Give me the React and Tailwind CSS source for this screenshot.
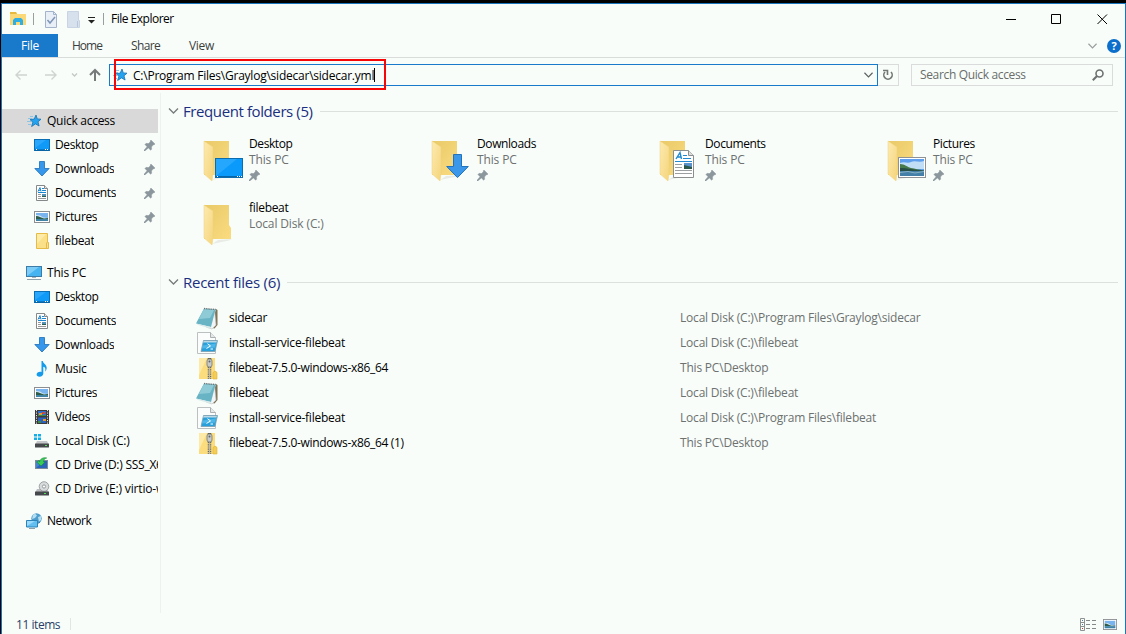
import React from "react";

function Star({ className = "" }) {
  return (
    <svg width="16" height="16" viewBox="0 0 16 16" className={`shrink-0 ${className}`}>
      <path d="M1 5.5h4M0 8.5h4M1 11.5h3M3 3.5h3" stroke="#8cc4e6" strokeWidth="1" />
      <path d="M9 2l1.300 3.900 3.700.3-3 2.600 1.100 4.200-3.600-2.100-3.900 2.600 1.300-4.300L3 6.600l4.200-.5z" fill="#25a3ee" stroke="#1673b4" strokeWidth=".8" />
    </svg>
  );
}
function DesktopShape() {
  return (
    <>
      <rect x=".5" y="2.5" width="15" height="11" fill="#109af8" stroke="#0b6fb5" />
      <path d="M1 11L12 3H1z" fill="#35adff" opacity=".7" />
      <path d="M1 13h14" stroke="#075a94" />
      <path d="M2 12.5h1M11 12.5h1M13 12.5h1" stroke="#fff" />
    </>
  );
}
function DocShape() {
  return (
    <>
      <path d="M2.5.5h8l3 3v12h-11z" fill="#fff" stroke="#85898a" />
      <path d="M10.5.5v3h3" fill="#e4e4e4" stroke="#85898a" />
      <path d="M4 6.5l2-4 1 4M4.7 5.3h2M8 3.5h2M8 5.5h4M4 7.5h8" stroke="#1c86cf" fill="none" />
      <path d="M4 9.5h3M4 11.5h3M4 13.5h8" stroke="#9a9a9a" />
      <path d="M8 9h4v3H8z" fill="#5791b8" />
      <path d="M8 11h4v1H8z" fill="#2d5f4c" />
    </>
  );
}
function PictureShape() {
  return (
    <>
      <rect x=".5" y="2.5" width="15" height="11" fill="#fff" stroke="#8b8f91" />
      <rect x="2" y="4" width="12" height="8" fill="#79b4ee" />
      <path d="M2 6l4 .5 3 2 5 .5v1H2z" fill="#d6e8f5" />
      <path d="M2 7c3 0 5 2 8 2.4L14 9v1H2z" fill="#2d5d4a" />
      <path d="M2 10h12v2H2z" fill="#4083a5" />
    </>
  );
}
const shapes = {
  desktop: <DesktopShape />,
  downloads: <path d="M5.5.5h5v7h4.7L8 15 .8 7.500h4.700z" fill="#3797ea" stroke="#1c6fb9" strokeWidth=".8" />,
  documents: <DocShape />,
  pictures: <PictureShape />,
  folder: (
    <>
      <path d="M2.500 .5h11v9h1v6h-12z" fill="#fbe08a" stroke="#e5bb45" />
      <path d="M12.500 9.500v6" stroke="#e5bb45" />
      <path d="M3 1l9 0L3 11z" fill="#fdebaa" />
    </>
  ),
  pc: (
    <>
      <rect x=".5" y="1.500" width="15" height="10" fill="#45b4f1" stroke="#3c7ca6" />
      <path d="M1 11V2h12z" fill="#7bcdf8" />
      <path d="M6 12.500h4" stroke="#a8b4bb" />
      <path d="M1 14.500h14" stroke="#8fa1ab" />
    </>
  ),
  music: (
    <path d="M7.500 0h1.300c.3 3 4.200 3.500 3.900 7.200-.1 1.500-1 2.700-1.700 3.200.9-2.500.3-4.200-1.700-4.700v6.800c0 2-1.700 3.200-3.700 3.200-1.900 0-3-.9-3-2.200 0-1.900 2.300-3.200 4.900-2.600z" fill="#159bea" />
  ),
  videos: (
    <>
      <rect x="1" y="1" width="14" height="14" fill="#3c3c3c" />
      <path d="M2.500 1v14M13.500 1v14" stroke="#e6e6e6" strokeDasharray="1.200 1.300" />
      <rect x="4" y="2" width="8" height="5" fill="#3370cd" />
      <rect x="4" y="8.500" width="8" height="5.500" fill="#2c62bd" />
      <path d="M5 4h3v2H5zM9 10h3v2H9z" fill="#e79a26" />
      <path d="M8 3h3v2H8z" fill="#ce4a36" />
      <path d="M4 6h8v1H4zM4 12h3v2H4z" fill="#3c8a43" />
    </>
  ),
  disk: (
    <>
      <path d="M0 1h3v2.500H0zM4 1h3v2.500H4zM0 4.500h3V7H0zM4 4.500h3V7H4z" fill="#12aee9" />
      <path d="M3 8h10l1.500 3H1.500z" fill="#c4c7c9" />
      <rect x="1" y="10.500" width="14" height="4" rx=".5" fill="#46494b" />
      <rect x="11" y="12" width="2" height="1" fill="#51df5c" />
    </>
  ),
  install: (
    <>
      <rect x="1.500" y="3.500" width="12" height="8" fill="#4385d2" stroke="#7b8b9b" />
      <path d="M2 11l8-7h3v7z" fill="#2865ba" />
      <path d="M5 3.500L2.800 5 7 9 11 5H9.500c0-2.200 1.200-3.500 3.200-4C9 0 6 2 5.500 5z" fill="#37cb56" stroke="#148a35" strokeWidth=".6" />
    </>
  ),
  cd: (
    <>
      <path d="M3 8h10l1.500 3H1.500z" fill="#babdc0" />
      <circle cx="10" cy="5.500" r="4.800" fill="#d7dbdc" stroke="#8b9192" strokeWidth=".8" />
      <circle cx="10" cy="5.500" r="1.600" fill="#fff" stroke="#858989" strokeWidth=".8" />
      <rect x="1" y="10.500" width="14" height="4" rx=".5" fill="#46494b" />
      <rect x="10" y="12" width="2" height="1" fill="#51df5c" />
    </>
  ),
  network: (
    <>
      <circle cx="10.500" cy="5.500" r="5.200" fill="#4c9dcc" />
      <path d="M7 1.700c2-1.300 3-.5 4 .8L9 5 6 6zM12 4l3-1v4l-2 2z" fill="#b5dff1" />
      <path d="M13 9l1.500-1-2 3z" fill="#245f87" />
      <path d="M.5 7.500h11v6.500H.5z" fill="#63bff0" stroke="#2c83b8" />
      <path d="M1 13V8h8z" fill="#9bdafa" />
      <path d="M3 15.500h6" stroke="#8ba2ae" />
    </>
  ),
};
function Icon({ name, className = "" }) {
  return <svg width="16" height="16" viewBox="0 0 16 16" className={`shrink-0 ${className}`}>{shapes[name]}</svg>;
}
function Pin({ className = "" }) {
  return (
    <svg width="11" height="11" viewBox="0 0 11 11" className={`shrink-0 ${className}`}>
      <path d="M7 0l4 4-1 .9-.8-.1-1.700 2.200.2 2.200-1.100 1-2.200-2.200L.8 11H0v-.8L3 6.700 .9 4.500l1.200-1.200 2.300.3 2-1.800-.3-.9z" fill="#8b979c" stroke="#8b979c" strokeWidth=".4" />
    </svg>
  );
}
function Chevron({ color = "#777b79", className = "", w = 10 }) {
  return (
    <svg width={w} height="6" viewBox="0 0 10 6" className={`shrink-0 ${className}`}>
      <path d="M.5.5L5 5 9.500.5" fill="none" stroke={color} strokeWidth="1.300" />
    </svg>
  );
}

const overlays = {
  desktop: (
    <>
      <rect x="19.500" y="22.500" width="27" height="19" fill="#0a9afb" stroke="#0b6cae" />
      <path d="M20 40V23h21z" fill="#2caaff" opacity=".8" />
      <path d="M20 40.500h26" stroke="#0565a8" />
      <path d="M21 40.500h1M41 40.500h1M43 40.500h1M45 40.500h1" stroke="#fff" />
    </>
  ),
  downloads: <path d="M29.500 18.500h8v12h6.800L33.500 41.600 22.700 30.500h6.800z" fill="#3a97ea" stroke="#2273bb" />,
  documents: (
    <>
      <path d="M21.500 14.500h15l5 5v22h-20z" fill="#fff" stroke="#8b8e8f" />
      <path d="M36.500 14.500v5h5" fill="#ddd" stroke="#8b8e8f" />
      <path d="M24 23l4-6.500 1.500 6.500M25.500 21h4" fill="none" stroke="#2189d0" strokeWidth="1.400" />
      <path d="M31 19.500h4M31 22.500h8M23 25.500h17" stroke="#2189d0" />
      <path d="M23 28.500h7M23 31.500h7M23 34.500h17M23 37.500h17" stroke="#9c9fa0" />
      <path d="M32 27h8v6h-8z" fill="#5b92cc" />
      <path d="M32 29l8 2v2h-8z" fill="#2c594b" />
    </>
  ),
  pictures: (
    <>
      <rect x="18.500" y="21.500" width="27" height="20" fill="#fff" stroke="#8e9294" />
      <rect x="20" y="23" width="24" height="17" fill="#5d9fed" />
      <path d="M20 27c5-2 7 1 11-1s8 1 13-1v8H20z" fill="#c0def5" />
      <path d="M20 28c5 0 7 3 11 4s8 1 13 3H20z" fill="#477a4b" />
      <path d="M20 32c8 0 14 2 24 2.500V36H20z" fill="#284f45" />
      <path d="M20 35h24v5H20z" fill="#447fa8" />
      <path d="M20 36.500l8-1 7 1.500 9-1.500" fill="none" stroke="#86b1c5" />
    </>
  ),
};
function BigFolder({ kind }) {
  return (
    <svg width="48" height="48" viewBox="0 0 48 48" className="shrink-0">
      <defs>
        <linearGradient id={`b-${kind}`} x1="0" y1="0" x2="1" y2="1">
          <stop offset="0" stopColor="#e9c968" />
          <stop offset="1" stopColor="#fadc80" />
        </linearGradient>
        <linearGradient id={`f-${kind}`} x1="0" y1="0" x2="1" y2="1">
          <stop offset="0" stopColor="#fdeab0" />
          <stop offset="1" stopColor="#f5d57b" />
        </linearGradient>
      </defs>
      <path d="M16 44l6-4 14-1-3 1.500z" fill="#e9ece6" />
      <path d={kind === "plain" ? "M8 5h25v20l2 3v11H8z" : "M8 5h25v34H8z"} fill={`url(#b-${kind})`} />
      <path d="M8 5l9 6v27l-1 7-8-7z" fill={`url(#f-${kind})`} stroke="#efd27f" strokeWidth=".5" />
      {overlays[kind]}
    </svg>
  );
}

function FileIcon({ kind }) {
  return (
    <svg width="24" height="24" viewBox="0 0 24 24" className="shrink-0">
      {kind === "note" && (
        <>
          <path d="M21 3l1.500 1v15l-3 3.500-4-1z" fill="#7f7255" />
          <path d="M19.500 4L21 19l-4 4-6-2z" fill="#f2f5f5" stroke="#b9c1c2" strokeWidth=".6" />
          <path d="M9 2.500L20.500 3.500 16 21 1 17.500z" fill="#68b4c5" />
          <path d="M9 3l10 1-4 8-11 1z" fill="#9bd3dc" opacity=".75" />
          <path d="M1 17.500L16 21l-.5 1.500L3 19z" fill="#d9e9e9" />
          <path d="M9 2.500l12 1" stroke="#6d7475" strokeWidth="1.400" strokeDasharray="1 .8" />
        </>
      )}
      {kind === "script" && (
        <>
          <path d="M2.500 1.500h13l5 5v16h-18z" fill="#fbfcfc" stroke="#bcc0c0" />
          <path d="M15.500 1.500v5h5" fill="#e5e8e8" stroke="#aaafb0" />
          <path d="M8.500 9.500h14L20 20.500H6z" fill="#2aa0da" stroke="#7f9eac" strokeWidth=".8" />
          <path d="M8.600 10h13.300l-.4 1.600H8.200z" fill="#bcd9e5" />
          <path d="M7.500 14.500L21 12.500l-1 4-13 1z" fill="#5bc1ee" opacity=".7" />
          <path d="M12.500 12.700l3 2.200-4 2.600M15.500 18h2.500" stroke="#fff" fill="none" />
        </>
      )}
      {kind === "zip" && (
        <>
          <path d="M4 2h16v13l2 1v7H4z" fill="#fbdd7e" />
          <path d="M4 2h8L4 19z" fill="#fdeaa6" />
          <path d="M18 23v-6.500l2-1.500 2 1.500V23z" fill="#f6cd54" stroke="#dfb136" strokeWidth=".6" />
          <path d="M14.500 2v21" stroke="#5e5e58" strokeWidth="3.500" strokeDasharray="1 .8" />
          <path d="M14.500 9v14" stroke="#b9bab5" strokeWidth="1.200" />
          <rect x="12" y="3" width="5" height="8" rx="2" fill="#c6cac9" stroke="#737979" strokeWidth=".8" />
          <circle cx="14.500" cy="5.500" r="1" fill="#5e6464" />
        </>
      )}
    </svg>
  );
}

const quick = [
  ["desktop", "Desktop", true, "tracking-[-0.4px]"],
  ["downloads", "Downloads", true, "tracking-[-0.35px]"],
  ["documents", "Documents", true, "tracking-[-0.35px]"],
  ["pictures", "Pictures", true, "tracking-[-0.35px]"],
  ["folder", "filebeat", false, "tracking-[-0.3px]"],
];
const pc = [
  ["desktop", "Desktop", false, "tracking-[-0.4px]"],
  ["documents", "Documents", false, "tracking-[-0.35px]"],
  ["downloads", "Downloads", false, "tracking-[-0.35px]"],
  ["music", "Music", false, "tracking-[-0.2px]"],
  ["pictures", "Pictures", false, "tracking-[-0.35px]"],
  ["videos", "Videos", false, "tracking-[-0.35px]"],
  ["disk", "Local Disk (C:)", false, "tracking-[-0.13px]"],
  ["install", "CD Drive (D:) SSS_X6", false, "tracking-[-0.25px]"],
  ["cd", "CD Drive (E:) virtio-w", false, "tracking-[-0.15px]"],
];
function NavRow({ row: [icon, label, pinned, track] }) {
  return (
    <div className="flex h-6 items-center pl-8">
      <Icon name={icon} />
      <span className={`ml-[5px] overflow-hidden whitespace-nowrap ${track}`}>{label}</span>
      {pinned && <Pin className="ml-auto mr-[3px]" />}
    </div>
  );
}
const tiles = [
  ["desktop", "Desktop", "This PC", true, "tracking-[-0.4px]"],
  ["downloads", "Downloads", "This PC", true, "tracking-[-0.4px]"],
  ["documents", "Documents", "This PC", true, "tracking-[-0.4px]"],
  ["pictures", "Pictures", "This PC", true, "tracking-[-0.4px]"],
  ["plain", "filebeat", "Local Disk (C:)", false, "tracking-[-0.3px]"],
];
const files = [
  ["note", "sidecar", "Local Disk (C:)\\Program Files\\Graylog\\sidecar", "tracking-[-0.3px]"],
  ["script", "install-service-filebeat", "Local Disk (C:)\\filebeat", "tracking-[-0.23px]"],
  ["zip", "filebeat-7.5.0-windows-x86_64", "This PC\\Desktop", "tracking-[-0.33px]"],
  ["note", "filebeat", "Local Disk (C:)\\filebeat", "tracking-[-0.3px]"],
  ["script", "install-service-filebeat", "Local Disk (C:)\\Program Files\\filebeat", "tracking-[-0.23px]"],
  ["zip", "filebeat-7.5.0-windows-x86_64 (1)", "This PC\\Desktop", "tracking-[-0.33px]"],
];
function Heading({ children, track }) {
  return (
    <div className="flex h-6 items-center pl-[7px] pr-[7px]">
      <Chevron w={11} />
      <h2 className={`ml-1 whitespace-nowrap text-[15px] leading-6 text-[#1b2f80] ${track}`}>{children}</h2>
      <div className="ml-[7px] mt-px h-px grow bg-[#dde1de]" />
    </div>
  );
}

export default function App() {
  return (
    <div className="flex h-[634px] w-[1126px] flex-col overflow-hidden bg-black pl-px pt-[3px] font-['Open_Sans','Noto_Sans',sans-serif] text-[12px] leading-4 tracking-[-0.2px] text-black">
      <div className="flex min-h-0 grow flex-col border-x border-t border-[#1a75bd] bg-[#f8fdfa]">
        <header className="flex h-[30px] shrink-0 items-center pl-2">
          <svg width="16" height="16" viewBox="0 0 16 16">
            <path d="M0 1h6l1 2h9v11H0z" fill="#fbd978" />
            <path d="M0 1h6l1 2H0z" fill="#e8b93f" />
            <path d="M3 14V9l2-2h6l2 2v5h-3v-3H6v3z" fill="#2faee5" />
          </svg>
          <div className="ml-[7px] h-3 w-px bg-[#9a9e9c]" />
          <svg width="36" height="17" viewBox="0 0 36 17" className="ml-[11px]">
            <path d="M.5.5h8l3 3v13H.5z" fill="#e9eff6" stroke="#a3b3cc" />
            <path d="M8.500.5v3h3" fill="none" stroke="#a3b3cc" />
            <path d="M2.500 9l2.500 3 5-6" fill="none" stroke="#7f95b8" strokeWidth="1.500" />
            <path d="M22.500 .5h11v9h1v7h-12z" fill="#d6e1ed" stroke="#c8d4e3" />
            <path d="M32.500 10v6" stroke="#b7c6d9" />
          </svg>
          <svg width="7" height="7" viewBox="0 0 7 7" className="ml-[7px] mt-[3px]">
            <path d="M0 .5h7" stroke="#222" />
            <path d="M0 3h7L3.500 6.500z" fill="#222" />
          </svg>
          <div className="ml-2 h-3 w-px bg-[#9a9e9c]" />
          <span className="ml-[7px] tracking-[-0.5px]">File Explorer</span>
          <svg width="102" height="11" viewBox="0 0 102 11" className="ml-auto mr-[17px]" fill="none" stroke="#000">
            <path d="M0 5.500h10" />
            <path d="M45.500.5h9v9h-9z" />
            <path d="M91.500.5l9.500 9.500M101 .5l-9.500 9.500" />
          </svg>
        </header>
        <nav className="flex h-6 shrink-0 items-center border-b border-[#d9dcda] text-[#3c3f3e]">
          <span className="flex h-[23px] w-14 items-center justify-center bg-[#1979ca] text-white">File</span>
          <span className="ml-[14px] w-[59px] tracking-[-1px]">Home</span>
          <span className="w-[58px] tracking-[-0.6px]">Share</span>
          <span className="tracking-[-0.3px]">View</span>
          <Chevron color="#9a9e9c" className="ml-auto mr-[10px]" w={9} />
          <span className="mr-[4px] flex size-[14px] items-center justify-center rounded-full bg-[#0c6fcb] text-[11px] font-bold leading-none tracking-normal text-white">?</span>
        </nav>
        <div className="flex h-[35px] shrink-0 items-center pb-px pl-[13px]">
          <svg width="90" height="14" viewBox="0 0 90 14" fill="none" className="shrink-0">
            <path d="M12 7H1M5.500 2.500L1 7l4.500 4.500M30 7h11M36.500 2.500L41 7l-4.500 4.500" stroke="#d0d3d1" strokeWidth="1.400" />
            <path d="M57 5.500l2.500 2.500L62 5.500" stroke="#c4c7c5" strokeWidth="1.300" />
            <path d="M80 13V2M75 7l5-5 5 5" stroke="#777b79" strokeWidth="2" />
          </svg>
          <div className="relative ml-1 flex h-[22px] w-[769px] shrink-0 items-center border border-[#1979ca] pl-[3px]">
            <Star />
            <span className="ml-[4px] whitespace-nowrap pt-[2px] tracking-[-0.23px]">C:\Program Files\Graylog\sidecar\sidecar.yml</span>
            <span className="h-[14px] w-px bg-black" />
            <Chevron color="#5c605e" className="ml-auto mr-1" w={9} />
            <div className="absolute -top-[6px] left-1 h-[31px] w-[272px] border-2 border-[#f60606]" />
          </div>
          <div className="flex h-[22px] w-[21px] shrink-0 items-center justify-center border border-l-0 border-[#d9dcda]">
            <svg width="12" height="12" viewBox="0 0 12 12" fill="none" stroke="#737775" strokeWidth="1.600">
              <path d="M3 3a4.200 4.200 0 1 0 6 0" />
              <path d="M1 1.500h4.500V6" />
            </svg>
          </div>
          <div className="ml-3 flex h-[22px] w-[202px] shrink-0 items-center border border-[#d9dcda] pl-2 text-[#696d6b]">
            <span className="tracking-[-0.35px]">Search Quick access</span>
            <svg width="12" height="12" viewBox="0 0 12 12" className="ml-auto mr-2" fill="none" stroke="#6d716f">
              <circle cx="7.500" cy="4.500" r="3.500" strokeWidth="1.600" />
              <path d="M5 7L.8 11.200" strokeWidth="2" />
            </svg>
          </div>
        </div>
        <div className="flex min-h-0 grow">
          <aside className="w-[156px] shrink-0 overflow-hidden pt-4">
            <div className="flex h-6 items-center bg-[#d9d9d9] pl-[25px]">
              <Star />
              <span className="ml-1 tracking-[-0.27px]">Quick access</span>
            </div>
            {quick.map((r) => <NavRow key={r[1]} row={r} />)}
            <div className="mt-2 flex h-6 items-center pl-6">
              <Icon name="pc" />
              <span className="ml-[5px]">This PC</span>
            </div>
            {pc.map((r) => <NavRow key={r[1]} row={r} />)}
            <div className="mt-2 flex h-6 items-center pl-6">
              <Icon name="network" />
              <span className="ml-[5px] tracking-[-0.5px]">Network</span>
            </div>
          </aside>
          <div className="ml-[2px] h-[520px] w-px bg-[#eef1ef]" />
          <main className="min-w-0 grow pt-[6px]">
            <Heading track="tracking-[-0.4px]">Frequent folders (5)</Heading>
            <div className="mt-[13px] grid grid-cols-[repeat(4,228px)] pl-[35px]">
              {tiles.map(([kind, name, place, pinned, track]) => (
                <div key={name} className="flex h-16">
                  <BigFolder kind={kind} />
                  <div className="ml-[5px]">
                    <div className={track}>{name}</div>
                    <div className="whitespace-nowrap tracking-[-0.13px] text-[#6d716f]">{place}</div>
                    {pinned && <Pin className="mt-[2px]" />}
                  </div>
                </div>
              ))}
            </div>
            <div className="mt-[6px]">
              <Heading track="tracking-[-0.25px]">Recent files (6)</Heading>
            </div>
            <div className="mt-[11px] pl-[34px]">
              {files.map(([kind, name, place, track], i) => (
                <div key={i} className="flex h-[25px] items-center">
                  <FileIcon kind={kind} />
                  <span className={`ml-[10px] w-[451px] ${track}`}>{name}</span>
                  <span className="text-[#6d716f]">{place}</span>
                </div>
              ))}
            </div>
          </main>
        </div>
        <footer className="flex h-[20px] shrink-0 items-center pl-[14px] text-[#2a3d66]">
          <span className="pt-[2px] tracking-[-0.45px]">11 items</span>
          <div className="ml-[10px] h-3 w-px bg-[#e2e5e3]" />
          <svg width="16" height="13" viewBox="0 0 16 13" className="ml-auto" fill="none">
            <path d="M.5.500h4v12h-4zM.5 4.500h4M.5 8.500h4" stroke="#8d9190" />
            <path d="M6 2.500h4M12 2.500h4M6 6.500h4M12 6.500h4M6 10.500h4M12 10.500h4" stroke="#858988" />
            <path d="M2 2.500h1" stroke="#4b79a5" />
            <path d="M2 6.500h1" stroke="#4b79a5" />
            <path d="M2 10.500h1" stroke="#c33" />
          </svg>
          <svg width="14" height="11" viewBox="0 2 16 12" preserveAspectRatio="none" className="ml-[7px] mr-[8px] shrink-0">
            <PictureShape />
          </svg>
        </footer>
      </div>
    </div>
  );
}
